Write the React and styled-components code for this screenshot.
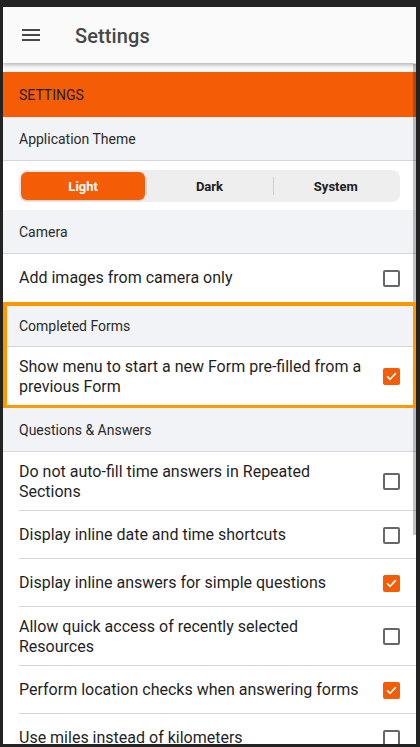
import React, { useState } from 'react';
import styled, { createGlobalStyle } from 'styled-components';

const GlobalStyle = createGlobalStyle`
  html, body {
    margin: 0;
    padding: 0;
    background: #232323;
  }
  body {
    font-family: Roboto, 'Liberation Sans', sans-serif;
  }
`;

const Frame = styled.div`
  position: relative;
  height: 737px;
  margin: 7px 4px 3px 3px;
  background: #fafafa;
  overflow: hidden;
  display: flex;
  flex-direction: column;
`;

const TopBar = styled.header`
  position: relative;
  z-index: 3;
  flex: 0 0 56px;
  display: flex;
  align-items: center;
  background: #fafafa;
  box-shadow: 0 2px 4px rgba(0, 0, 0, 0.28);
`;

const MenuButton = styled.button`
  width: 56px;
  height: 56px;
  border: none;
  background: none;
  padding: 0;
  display: flex;
  align-items: center;
  justify-content: center;
  cursor: pointer;
`;

const Title = styled.h1`
  margin: 1px 0 0 16px;
  font-size: 20px;
  font-weight: 500;
  color: #474747;
  letter-spacing: 0.1px;
`;

const Content = styled.main`
  flex: 1;
  padding-top: 9px;
  background: #fafafa;
`;

const Banner = styled.div`
  height: 45px;
  display: flex;
  align-items: center;
  padding: 0 16px;
  background: #f45c06;
  color: #1e1e1e;
  font-size: 14px;
`;

const SectionHead = styled.div`
  height: ${(p) => (p.$compact ? '40px' : '43px')};
  display: flex;
  align-items: center;
  padding: 0 16px;
  background: #f2f3f7;
  border-bottom: 1px solid #d6d6d9;
  color: #2a2a2a;
  font-size: 14px;
`;

const Highlight = styled.div`
  position: relative;
  z-index: 2;
  background: #f2f3f7;
  padding: 4px 0 2px 0;
  &::after {
    content: '';
    position: absolute;
    inset: 0;
    border: 4px solid #ff9800;
    border-right-width: 3px;
    border-bottom-width: 3px;
    pointer-events: none;
  }
`;

const Row = styled.label`
  display: flex;
  align-items: center;
  gap: 16px;
  min-height: 48px;
  box-sizing: border-box;
  padding: 10px 16px;
  background: #fff;
  position: relative;
  cursor: pointer;
  &::after {
    content: '';
    position: absolute;
    left: 16px;
    right: 0;
    bottom: 0;
    height: 1px;
    background: ${(p) => (p.$last ? 'transparent' : '#d4d4d4')};
  }
`;

const RowText = styled.span`
  flex: 1;
  font-size: 16px;
  line-height: 19.5px;
  color: #1f1f1f;
`;

const Box = styled.span`
  flex: 0 0 17px;
  width: 17px;
  height: 17px;
  box-sizing: border-box;
  border-radius: 2px;
  border: ${(p) => (p.$on ? 'none' : '2px solid #676767')};
  background: ${(p) => (p.$on ? '#f45c06' : '#fff')};
  display: flex;
  align-items: center;
  justify-content: center;
`;

const ThemeWrap = styled.div`
  background: #fff;
  padding: 9px 16px 8px 16px;
`;

const Segments = styled.div`
  display: grid;
  grid-template-columns: repeat(3, 1fr);
  height: 32px;
  box-sizing: border-box;
  padding: 2px 0 2px 2px;
  border-radius: 8px;
  background: #eeeeee;
`;

const Segment = styled.button`
  position: relative;
  margin-right: 2px;
  border: none;
  border-radius: 6px;
  font-family: inherit;
  font-size: 13px;
  font-weight: 700;
  color: ${(p) => (p.$active ? '#fff' : '#202020')};
  background: ${(p) => (p.$active ? '#f45c06' : 'transparent')};
  box-shadow: ${(p) => (p.$active ? '0 1px 2px rgba(0,0,0,0.15)' : 'none')};
  cursor: pointer;
  &::before {
    content: '';
    position: absolute;
    left: -1px;
    top: 5px;
    bottom: 5px;
    width: 1px;
    background: ${(p) => (p.$divider ? '#cfcfcf' : 'transparent')};
  }
`;

const ScrollThumb = styled.div`
  position: absolute;
  z-index: 1;
  right: 0;
  top: 57px;
  width: 3px;
  height: 471px;
  background: rgba(0, 0, 0, 0.24);
`;

const Check = ({ on, onToggle }) => (
  <Box $on={on} onClick={onToggle}>
    {on && (
      <svg width="13" height="13" viewBox="0 0 13 13">
        <path
          d="M2.6 6.8 L5.2 9.3 L10.4 3.6"
          fill="none"
          stroke="#fff"
          strokeWidth="1.7"
          strokeLinecap="round"
          strokeLinejoin="round"
        />
      </svg>
    )}
  </Box>
);

const Setting = ({ text, on, onToggle, last }) => (
  <Row $last={last}>
    <RowText>{text}</RowText>
    <Check on={on} onToggle={onToggle} />
  </Row>
);

const themes = ['Light', 'Dark', 'System'];

const App = () => {
  const [theme, setTheme] = useState('Light');
  const [prefs, setPrefs] = useState({
    cameraOnly: false,
    prefill: true,
    noAutofill: false,
    shortcuts: false,
    inlineAnswers: true,
    quickAccess: false,
    location: true,
    miles: false,
  });

  const toggle = (key) => (e) => {
    e.preventDefault();
    setPrefs({ ...prefs, [key]: !prefs[key] });
  };

  return (
    <>
      <GlobalStyle />
      <Frame>
        <TopBar>
          <MenuButton aria-label="menu">
            <svg width="18" height="12" viewBox="0 0 18 12">
              <rect x="0" y="0" width="18" height="2" fill="#474747" />
              <rect x="0" y="5" width="18" height="2" fill="#474747" />
              <rect x="0" y="10" width="18" height="2" fill="#474747" />
            </svg>
          </MenuButton>
          <Title>Settings</Title>
        </TopBar>
        <ScrollThumb />
        <Content>
          <Banner>SETTINGS</Banner>

          <SectionHead>Application Theme</SectionHead>
          <ThemeWrap>
            <Segments>
              {themes.map((t, i) => (
                <Segment
                  key={t}
                  $active={theme === t}
                  $divider={i > 0}
                  onClick={() => setTheme(t)}
                >
                  {t}
                </Segment>
              ))}
            </Segments>
          </ThemeWrap>

          <SectionHead>Camera</SectionHead>
          <Setting
            text="Add images from camera only"
            on={prefs.cameraOnly}
            onToggle={toggle('cameraOnly')}
            last
          />

          <Highlight>
            <SectionHead $compact>Completed Forms</SectionHead>
            <Setting
              text="Show menu to start a new Form pre-filled from a previous Form"
              on={prefs.prefill}
              onToggle={toggle('prefill')}
              last
            />
          </Highlight>

          <SectionHead>Questions &amp; Answers</SectionHead>
          <Setting
            text="Do not auto-fill time answers in Repeated Sections"
            on={prefs.noAutofill}
            onToggle={toggle('noAutofill')}
          />
          <Setting
            text="Display inline date and time shortcuts"
            on={prefs.shortcuts}
            onToggle={toggle('shortcuts')}
          />
          <Setting
            text="Display inline answers for simple questions"
            on={prefs.inlineAnswers}
            onToggle={toggle('inlineAnswers')}
          />
          <Setting
            text="Allow quick access of recently selected Resources"
            on={prefs.quickAccess}
            onToggle={toggle('quickAccess')}
          />
          <Setting
            text="Perform location checks when answering forms"
            on={prefs.location}
            onToggle={toggle('location')}
          />
          <Setting
            text="Use miles instead of kilometers"
            on={prefs.miles}
            onToggle={toggle('miles')}
          />
        </Content>
      </Frame>
    </>
  );
};

export default App;
